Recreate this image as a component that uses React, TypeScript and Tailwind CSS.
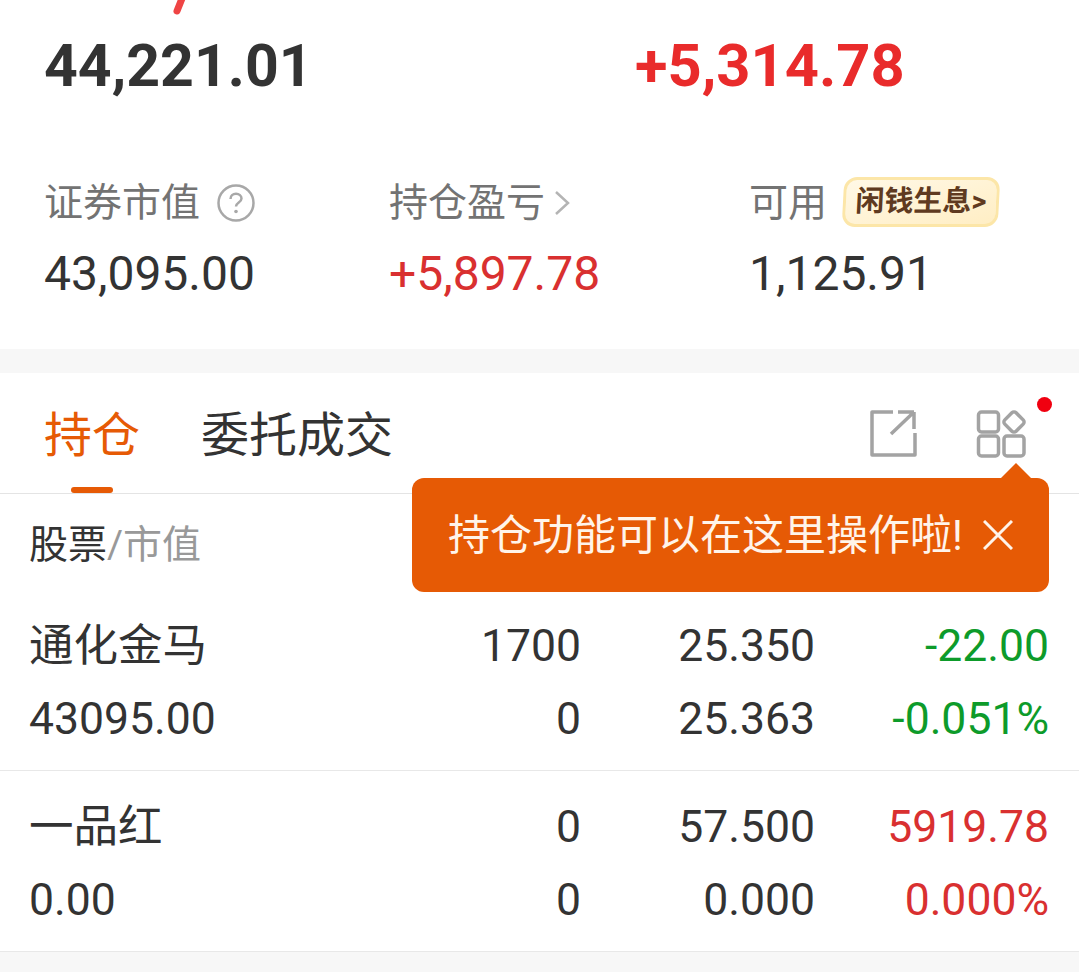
import React from "react";

const F = "font-['Roboto','Noto_Sans_CJK_SC',sans-serif]";

function Cells({ l, a, b, c, color }: { l: string; a: string; b: string; c: string; color: string }) {
  return (
    <div className="flex h-[56px] items-center">
      <span className="flex-1">{l}</span>
      <span className="w-[140px] text-right">{a}</span>
      <span className="w-[234px] text-right">{b}</span>
      <span className={`w-[234px] text-right ${color}`}>{c}</span>
    </div>
  );
}

function Stat({ w, label, value, valueClass, extra }: { w: string; label: string; value: string; valueClass: string; extra: React.ReactNode }) {
  return (
    <div className={`${w} flex flex-col`}>
      <div className="flex items-center h-[56px] mt-[1px] text-[39px] text-[#737373]">
        <span>{label}</span>
        {extra}
      </div>
      <div className="mt-[15px] text-[48px] leading-[56px]">
        <span className={valueClass}>{value}</span>
      </div>
    </div>
  );
}

export default function App() {
  return (
    <div className={`relative w-[1079px] h-[972px] overflow-hidden bg-white ${F}`}>
      <svg className="absolute left-[165px] top-0" width="28" height="18" viewBox="0 0 28 18">
        <path d="M18 -4 L12 11" stroke="#ef4444" strokeWidth="7" strokeLinecap="round" fill="none" />
      </svg>

      <div className="h-[349px] pl-[44px] flex flex-col">
        <div className="flex pt-[32px] h-[174px] leading-[68px] font-bold">
          <span className="w-[591px] text-[59px] text-[#333333]">44,221.01</span>
          <span className="text-[59.6px] text-[#e92b2b]">+5,314.78</span>
        </div>
        <div className="flex">
          <Stat
            w="w-[345px]"
            label="证券市值"
            value="43,095.00"
            valueClass="text-[#333333]"
            extra={
              <svg className="ml-[16px]" width="40" height="40" viewBox="0 0 40 40" fill="none">
                <circle cx="20" cy="20" r="17.5" stroke="#a8a8a8" strokeWidth="2.5" />
                <path d="M14.5 16c0-3.2 2.4-5.2 5.5-5.2s5.5 2 5.5 4.8c0 4-5.5 4-5.5 8" stroke="#a8a8a8" strokeWidth="2.5" />
                <circle cx="20" cy="28.5" r="1.8" fill="#a8a8a8" />
              </svg>
            }
          />
          <Stat
            w="w-[360px]"
            label="持仓盈亏"
            value="+5,897.78"
            valueClass="text-[#d93030]"
            extra={
              <svg className="ml-[8px]" width="20" height="28" viewBox="0 0 20 28" fill="none">
                <path d="M3 3l12 11L3 25" stroke="#b4b4b4" strokeWidth="2.5" />
              </svg>
            }
          />
          <Stat
            w="w-[300px]"
            label="可用"
            value="1,125.91"
            valueClass="text-[#333333]"
            extra={
              <span className="ml-[16px] -mt-[2px] flex items-center justify-center w-[156px] h-[50px] rounded-[13px] border-[3px] border-[#fce6a8] bg-linear-to-br from-[#fff8e6] to-[#ffeec4] text-[29px] font-bold text-[#5f3a20] -skew-x-3 whitespace-nowrap">
                闲钱生息&gt;
              </span>
            }
          />
        </div>
      </div>

      <div className="h-[24px] bg-[#f7f7f7]" />

      <div className="h-[121px] border-b border-[#e4e4e4] pl-[44px] pr-[45px] pt-[5px] relative flex items-center">
        <span className="text-[48px] text-[#e65a05]">持仓</span>
        <span className="ml-[61px] text-[48px] text-[#333333]">委托成交</span>
        <span className="absolute left-[71px] bottom-0 w-[42px] h-[6px] rounded-full bg-[#e65a05]" />
        <svg className="absolute left-[869px] top-[36px]" width="50" height="48" viewBox="0 0 50 48" fill="none" stroke="#a3a3a3" strokeWidth="3.5">
          <path d="M24 3H3v43h43V24" strokeLinejoin="round" />
          <path d="M45 3v17M45 3H29M45 3L22 25" />
        </svg>
        <svg className="absolute left-[976px] top-[37px]" width="50" height="48" viewBox="0 0 50 48" fill="none" stroke="#a3a3a3" strokeWidth="3.5">
          <rect x="2.5" y="2" width="20" height="20" rx="3" />
          <rect x="2.5" y="26" width="20" height="20" rx="3" />
          <rect x="28" y="26" width="20" height="20" rx="3" />
          <rect x="30" y="4" width="16" height="16" rx="3" transform="rotate(45 38 12)" />
        </svg>
        <span className="absolute left-[1037px] top-[24px] w-[15px] h-[15px] rounded-full bg-[#f00010]" />
      </div>

      <div className="h-[103px] pl-[29px] pt-[23px] text-[39px] leading-[56px]">
        <span className="text-[#333333]">股票</span>
        <span className="text-[#999999]">/市值</span>
      </div>

      <div className="h-[174px] border-b border-[#e8e8e8] pl-[29px] pr-[30px] pt-[21px] flex flex-col gap-[17px] text-[44.5px] text-[#333333]">
        <Cells l="通化金马" a="1700" b="25.350" c="-22.00" color="text-[#0d9b2a]" />
        <Cells l="43095.00" a="0" b="25.363" c="-0.051%" color="text-[#0d9b2a]" />
      </div>
      <div className="h-[181px] border-b border-[#e8e8e8] pl-[29px] pr-[30px] pt-[28px] flex flex-col gap-[17px] text-[44.5px] text-[#333333]">
        <Cells l="一品红" a="0" b="57.500" c="5919.78" color="text-[#d93030]" />
        <Cells l="0.00" a="0" b="0.000" c="0.000%" color="text-[#d93030]" />
      </div>
      <div className="h-[20px] bg-[#f7f7f7]" />

      <div className="absolute left-[412px] top-[478px] w-[637px] h-[114px] rounded-[12px] bg-[#e65a05] flex items-center pl-[36px] text-[42px] text-[#fff4ea]">
        <span className="whitespace-nowrap">持仓功能可以在这里操作啦!</span>
        <svg className="ml-[20px]" width="30" height="30" viewBox="0 0 30 30" stroke="#fff4ea" strokeWidth="3">
          <path d="M1 1l28 28M29 1L1 29" />
        </svg>
        <span className="absolute left-[589px] -top-[15px] w-0 h-0 border-x-[15px] border-x-transparent border-b-[15px] border-b-[#e65a05]" />
      </div>
    </div>
  );
}
